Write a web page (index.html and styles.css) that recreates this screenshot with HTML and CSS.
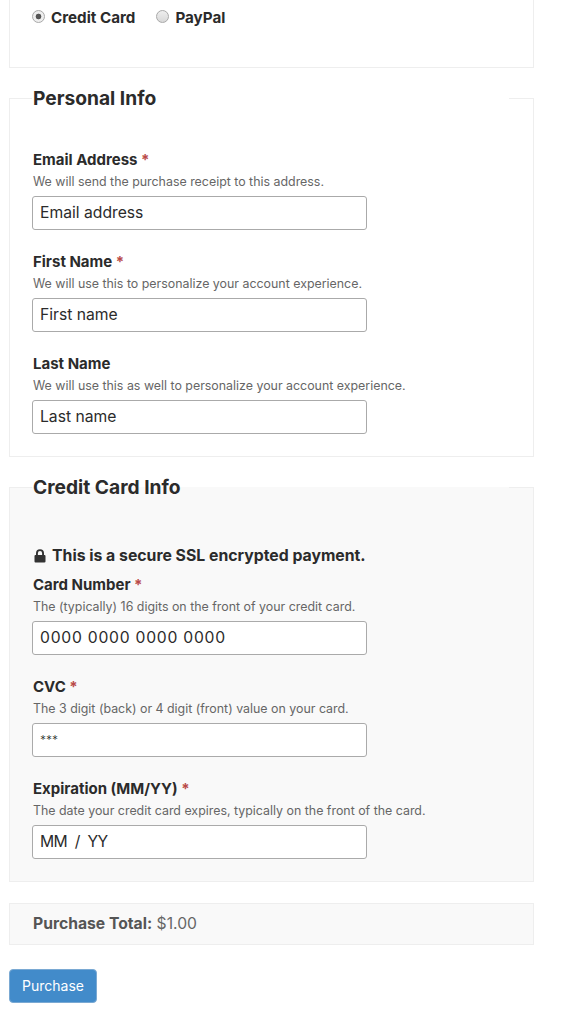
FILE: index.html
```html
<!DOCTYPE html>
<html lang="en">
<head>
	<meta charset="UTF-8">
	<title>Purchase</title>
	<link rel="stylesheet" href="styles.css">
</head>
<body>
	<form class="checkout">
		<div class="gateways">
			<label class="gateway"><input type="radio" name="gateway" checked><span>Credit Card</span></label>
			<label class="gateway"><input type="radio" name="gateway"><span>PayPal</span></label>
		</div>

		<fieldset class="group">
			<legend>Personal Info</legend>
			<div class="field">
				<label>Email Address <span class="req">*</span></label>
				<p class="help">We will send the purchase receipt to this address.</p>
				<input type="text" placeholder="Email address">
			</div>
			<div class="field">
				<label>First Name <span class="req">*</span></label>
				<p class="help">We will use this to personalize your account experience.</p>
				<input type="text" placeholder="First name">
			</div>
			<div class="field">
				<label>Last Name</label>
				<p class="help">We will use this as well to personalize your account experience.</p>
				<input type="text" placeholder="Last name">
			</div>
		</fieldset>

		<fieldset class="group card">
			<legend>Credit Card Info</legend>
			<div class="secure">
				<svg class="lock" viewBox="0 0 12 14" width="12" height="14"><path d="M2 6V4.200a4 4 0 0 1 8 0V6h.6c.5 0 .9.4.9.9v5.700c0 .5-.4.9-.9.9H1.400c-.5 0-.9-.4-.9-.9V6.900c0-.5.4-.9.9-.9H2zm1.900 0h4.200V4.200a2.100 2.100 0 0 0-4.200 0V6z" fill="#333"/></svg>
				<span>This is a secure SSL encrypted payment.</span>
			</div>
			<div class="field first">
				<label>Card Number <span class="req">*</span></label>
				<p class="help">The (typically) 16 digits on the front of your credit card.</p>
				<input type="text" class="digits" placeholder="0000 0000 0000 0000">
			</div>
			<div class="field">
				<label>CVC <span class="req">*</span></label>
				<p class="help">The 3 digit (back) or 4 digit (front) value on your card.</p>
				<input type="text" class="cvc" placeholder="***">
			</div>
			<div class="field">
				<label>Expiration (MM/YY) <span class="req">*</span></label>
				<p class="help">The date your credit card expires, typically on the front of the card.</p>
				<input type="text" class="expiry" placeholder="MM  /  YY">
			</div>
		</fieldset>

		<div class="total"><strong>Purchase Total:</strong> <span class="amount">$1.00</span></div>

		<button type="button" class="purchase">Purchase</button>
	</form>
</body>
</html>
```
FILE: styles.css
```css
*{
	box-sizing: border-box;
	margin: 0;
	padding: 0;
}
body{
	background: #fff;
	color: #2b2b2b;
	font-family: "Inter", "Liberation Sans", sans-serif;
	font-size: 14px;
}
.checkout{
	width: 525px;
	margin-left: 9px;
}
.gateways{
	display: flex;
	gap: 21px;
	height: 68px;
	padding: 9px 22px 0;
	border: 1px solid #eee;
	border-top: 0;
}
.gateway{
	display: flex;
	align-items: flex-start;
	gap: 6px;
	font-size: 15.200px;
	font-weight: 700;
	line-height: 18px;
}
.gateway input{
	appearance: none;
	width: 13px;
	height: 13px;
	margin-top: 1px;
	border: 1px solid #a9a9a9;
	border-radius: 50%;
	background: linear-gradient(#eee, #d8d8d8);
}
.gateway input:checked{
	background: radial-gradient(circle, #555 0 2.500px, #eee 3.200px);
}
.group{
	margin-top: 17px;
	padding: 0 22px 22px;
	border: 1px solid #eee;
}
.group legend{
	width: 477px;
	padding-left: 1px;
	font-size: 19.200px;
	font-weight: 700;
	line-height: 26px;
}
.group.card{
	margin-top: 17px;
	background: #f9f9f9;
}
.field{
	margin-top: 22px;
}
.field:first-of-type{
	margin-top: 39px;
}
.field.first{
	margin-top: 8px;
}
.field label{
	display: block;
	padding-left: 1px;
	font-size: 15px;
	font-weight: 700;
	line-height: 20px;
}
.req{
	color: #b94a48;
}
.help{
	margin-top: 3px;
	padding-left: 1px;
	color: #666;
	font-size: 12.400px;
	line-height: 18px;
}
.field input{
	display: block;
	width: 335px;
	height: 34px;
	margin-top: 5px;
	padding: 0 7px 2px;
	border: 1px solid #aaa;
	border-radius: 3px;
	background: #fff;
	color: #2b2b2b;
	font-family: inherit;
	font-size: 15.700px;
}
.field input::placeholder{
	color: #2b2b2b;
	opacity: 1;
	white-space: pre;
}
.field input.digits{
	letter-spacing: .75px;
}
.field input.cvc{
	font-size: 12px;
	font-weight: 300;
}
.field input.expiry{
	letter-spacing: -.6px;
}
.secure{
	display: flex;
	align-items: center;
	gap: 6px;
	margin-top: 45px;
	padding-left: 2px;
	font-size: 15.800px;
	font-weight: 700;
	line-height: 22px;
}
.total{
	height: 42px;
	margin-top: 21px;
	padding-left: 23px;
	border: 1px solid #eee;
	background: #f9f9f9;
	color: #555;
	font-size: 15.700px;
	line-height: 40px;
}
.amount{
	color: #666;
}
.purchase{
	display: block;
	width: 88px;
	height: 34px;
	margin-top: 24px;
	padding-bottom: 2px;
	border: 1px solid #7aa9d3;
	border-radius: 4px;
	background: #428bca;
	color: #fff;
	font-family: inherit;
	font-size: 14px;
}
```
